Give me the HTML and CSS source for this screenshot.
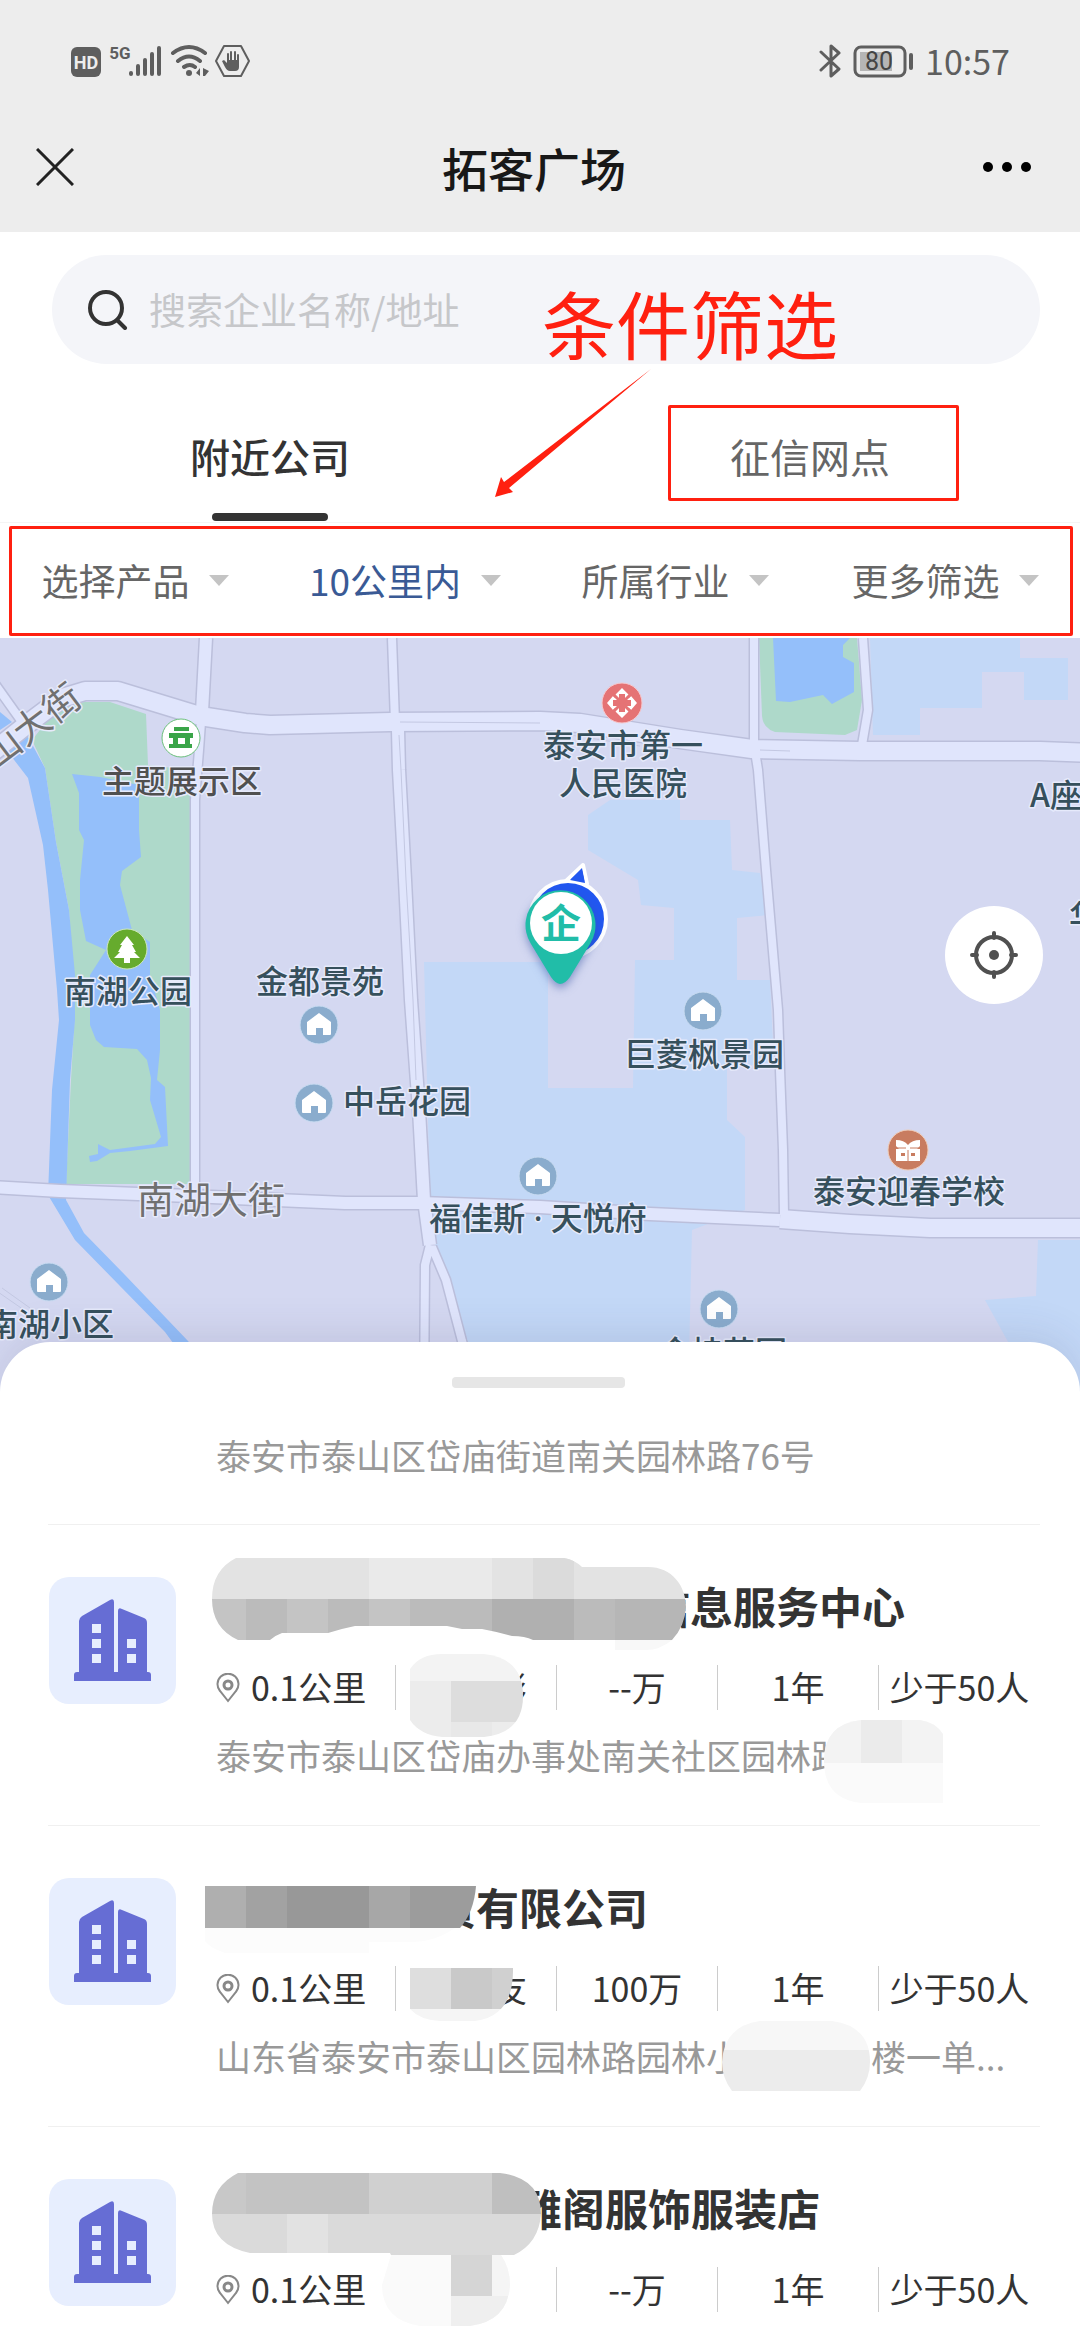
FILE: index.html
```html
<!DOCTYPE html>
<html lang="zh-CN">
<head>
    <meta charset="UTF-8">
    <meta name="viewport" content="width=device-width, initial-scale=1.0">
    <title>拓客广场</title>
    <link rel="stylesheet" href="styles.css">
</head>
<body>
    <svg class="defs" width="0" height="0" aria-hidden="true">
        <symbol id="building" viewBox="0 0 127 127">
            <path fill="#666dd4" d="M30 96V44q0-3 3-5l28-16q4-2 4 2v71zM69 96V34q0-4 4-2l22 9q3 1 3 5v50z"/>
            <path fill="#666dd4" d="M25 104v-6q0-3 3-3h71q3 0 3 3v6z"/>
            <path fill="#e7eefe" d="M43 47h9v9h-9zM43 62h9v9h-9zM43 77h9v9h-9zM78 62h9v9h-9zM78 77h9v9h-9z"/>
        </symbol>
        <symbol id="place" viewBox="0 0 24 30">
            <path fill="none" stroke="#888" stroke-width="2" d="M12 28L4 18a10.500 10.500 0 1 1 16 0z"/>
            <circle cx="12" cy="12" r="4" fill="none" stroke="#888" stroke-width="3"/>
        </symbol>
        <symbol id="home" viewBox="-20 -20 40 40">
            <circle r="19" fill="#8aaccd" stroke="#c9dcf2"/>
            <path fill="#fff" d="M0-12L12-3V9q0 1-1 1H4V3h-7v7h-8q-1 0-1-1V-3z"/>
        </symbol>
    </svg>

    <div class="app">
        <header class="topbar">
            <div class="status">
                <div class="status-left">
                    <svg width="180" height="36" viewBox="70 43 180 36" aria-hidden="true">
                        <rect x="71" y="47" width="30" height="30" rx="6" fill="#5e5e5e"/>
                        <text x="86" y="69" class="hd">HD</text>
                        <text x="120" y="59" class="net">5G</text>
                        <path stroke="#5e5e5e" stroke-width="4" stroke-linecap="round" d="M131 73v1M138 66v8M145 60v14M152 54v20M159 48v26"/>
                        <path fill="none" stroke="#5e5e5e" stroke-width="4" stroke-linecap="round" d="M173 53q16-12 32 0M178 61q11-9 22 0M184 67q6-4 11 0"/>
                        <circle cx="189" cy="73" r="3" fill="#5e5e5e"/>
                        <path fill="#5e5e5e" d="M196 73l4-5v8zM203 68l6 3-4 5h-2z"/>
                        <path fill="none" stroke="#5e5e5e" stroke-width="2" stroke-linejoin="round" d="M224 46h17l8 15-8 15h-17l-8-15z"/>
                        <path fill="#5e5e5e" d="M227 60h12v7q0 4-4 4h-5q-3 0-5-4l-3-6 2-1 3 3z"/>
                        <path stroke="#5e5e5e" stroke-width="2" stroke-linecap="round" d="M228 64V54M231 63V52M235 63V52M238 64V55"/>
                    </svg>
                </div>
                <div class="status-right">
                    <svg width="96" height="36" viewBox="818 43 96 36" aria-hidden="true">
                        <path fill="none" stroke="#5e5e5e" stroke-width="3" stroke-linecap="round" stroke-linejoin="round" d="M820 52l18 17-8 7V46l8 7-18 17"/>
                        <rect x="854" y="47" width="50" height="29" rx="6" fill="none" stroke="#5e5e5e" stroke-width="3"/>
                        <rect x="859" y="52" width="32" height="19" fill="#b5b5b5"/>
                        <text x="878" y="70" class="level">80</text>
                        <path stroke="#5e5e5e" stroke-width="4" stroke-linecap="round" d="M910 55v13"/>
                    </svg>
                    <span>10:57</span>
                </div>
            </div>
            <div class="navbar">
                <button class="nav-btn" aria-label="关闭">
                    <svg width="38" height="38" viewBox="0 0 38 38"><path stroke="#222" stroke-width="3" d="M1 1l36 36M37 1L1 37"/></svg>
                </button>
                <h1>拓客广场</h1>
                <button class="nav-btn more" aria-label="更多">
                    <svg width="50" height="12" viewBox="0 0 50 12"><circle cx="6" cy="6" r="5"/><circle cx="25" cy="6" r="5"/><circle cx="44" cy="6" r="5"/></svg>
                </button>
            </div>
        </header>

        <div class="search-wrap">
            <label class="search">
                <svg width="40" height="40" viewBox="0 0 40 40" aria-hidden="true"><circle cx="18" cy="18" r="16" fill="none" stroke="#333" stroke-width="4"/><path stroke="#333" stroke-width="4" stroke-linecap="round" d="M30 31l7 7"/></svg>
                <input type="search" placeholder="搜索企业名称/地址" aria-label="搜索企业名称/地址">
            </label>
            <div class="note">
                <span>条件筛选</span>
                <svg width="160" height="130" viewBox="490 369 160 130" aria-hidden="true"><path fill="#ff2010" d="M649 370L507 489l4 4-18 5 6-20 3 5z"/></svg>
            </div>
        </div>

        <div class="tabs">
            <button class="tab active">附近公司</button>
            <button class="tab marked">征信网点</button>
        </div>

        <div class="filters">
            <label class="filter">
                <select aria-label="选择产品"><option>选择产品</option></select>
            </label>
            <label class="filter active">
                <select aria-label="距离"><option>10公里内</option></select>
            </label>
            <label class="filter">
                <select aria-label="所属行业"><option>所属行业</option></select>
            </label>
            <label class="filter">
                <select aria-label="更多筛选"><option>更多筛选</option></select>
            </label>
        </div>

        <div class="map">
            <svg class="map-canvas" viewBox="0 638 1080 762" preserveAspectRatio="xMidYMin slice">
                <!-- blocks -->
                <g fill="#c3d8f7">
                    <path d="M424 962H548V1088H633L635 960H674V908L641 905 638 880 588 850V815L610 800H680V820H730L732 870 760 873 768 915 737 918V980H770L774 1065H727V1120L745 1137V1210L692 1230 688 1400H484L436 1250 430 1200z"/>
                    <path d="M870 638H1020V658H1068V700H1024V672H982V708H920V735H873z"/>
                    <path d="M1038 1240H1080V1400H1040L985 1300 1036 1296z"/>
                </g>
                <!-- parks -->
                <g fill="#aed9ca">
                    <path d="M32 740L60 705 85 702 110 702 146 714 148 765 191 770V1184H66L71 1080 75 1010 69 910 56 842 45 768z"/>
                    <path d="M759 638H857L862 700 857 730 845 735 775 732Q763 728 762 716z"/>
                </g>
                <!-- water -->
                <g fill="#94bffa">
                    <path d="M0 712L12 722 0 730z"/>
                    <path d="M8 752L27 735 45 768 56 842 69 910 75 975V1020L70 1080 66 1200 84 1233 125 1275 188 1341 240 1400H215L165 1332 75 1240 48 1195 52 1090 59 1020 57 990 48 890 43 845 28 778z"/>
                    <path d="M72 774L100 777 139 785V830L141 857 122 871 120 885 132 930 150 942V975L160 1010V1050L157 1080 165 1087 168 1146 130 1151 110 1153 97 1161 90 1162 89 1156 98 1154V1144L110 1150 155 1144 161 1137 150 1100 151 1078 147 1060 137 1049 104 1047 96 1040 90 1025V975L106 950 86 941 80 910V880L84 840 79 830V793z"/>
                    <path d="M773 638H850L843 645V657L854 663V692L832 704 823 695 790 702 776 701z"/>
                </g>
                <!-- roads: the edge first, then the surface over it -->
                <g class="road edge">
                    <path class="w20" d="M-20 762L30 722 62 698 85 691H118L200 716 245 723 270 725 390 722 540 721 580 723 680 739 752 749 860 751H1040L1090 753"/>
                    <path class="w14" d="M-10 1187L60 1191 190 1196 345 1203H420L540 1207 650 1214 780 1220"/>
                    <path class="w20" d="M780 1219L850 1224 930 1228H1090"/>
                    <path class="w14" d="M206 638L202 712M398 730L399 770 405 880 411 1000 419 1110 424 1200 430 1245"/>
                    <path class="w9" d="M-5 684L22 722M201 722L199 750 195 800V1190M392 638L395 722M754 638V745L758 770 766 870 778 1010 780 1070 783 1150 784 1215M863 638L868 710 862 745M430 1245L425 1265 424 1400M432 1247L446 1280 462 1341 480 1400"/>
                </g>
                <g class="road">
                    <path class="w20" d="M-20 762L30 722 62 698 85 691H118L200 716 245 723 270 725 390 722 540 721 580 723 680 739 752 749 860 751H1040L1090 753"/>
                    <path class="w14" d="M-10 1187L60 1191 190 1196 345 1203H420L540 1207 650 1214 780 1220"/>
                    <path class="w20" d="M780 1219L850 1224 930 1228H1090"/>
                    <path class="w14" d="M206 638L202 712M398 730L399 770 405 880 411 1000 419 1110 424 1200 430 1245"/>
                    <path class="w9" d="M-5 684L22 722M201 722L199 750 195 800V1190M392 638L395 722M754 638V745L758 770 766 870 778 1010 780 1070 783 1150 784 1215M863 638L868 710 862 745M430 1245L425 1265 424 1400M432 1247L446 1280 462 1341 480 1400"/>
                </g>
                <path fill="none" stroke="#c3c8e2" d="M399 735L401 770 406 880 413 1000 416 1080M400 722L540 723M570 735L640 746M760 750L790 751M-2 1292L24 1310M2 1288L30 1308"/>

                <!-- street names -->
                <g class="street">
                    <text transform="translate(40 736) rotate(-37)">山大街</text>
                    <text x="211" y="1214">南湖大街</text>
                </g>

                <!-- places -->
                <g class="place">
                    <text class="grey" x="182" y="793">主题展示区</text>
                    <text x="128" y="1003">南湖公园</text>
                    <text x="320" y="993">金都景苑</text>
                    <text x="407" y="1113">中岳花园</text>
                    <text x="538" y="1230">福佳斯<tspan class="dot"> · </tspan>天悦府</text>
                    <text x="50" y="1336">南湖小区</text>
                    <text x="723" y="1364">金桂花园</text>
                    <text x="704" y="1066">巨菱枫景园</text>
                    <text x="909" y="1203">泰安迎春学校</text>
                    <text x="623" y="757">泰安市第一</text>
                    <text x="623" y="795">人民医院</text>
                    <text x="1056" y="807">A座</text>
                    <text x="1085" y="928">华</text>
                </g>
                <use href="#home" x="299" y="1005" width="40" height="40"/>
                <use href="#home" x="294" y="1083" width="40" height="40"/>
                <use href="#home" x="518" y="1156" width="40" height="40"/>
                <use href="#home" x="29" y="1262" width="40" height="40"/>
                <use href="#home" x="699" y="1289" width="40" height="40"/>
                <use href="#home" x="683" y="991" width="40" height="40"/>
                <g transform="translate(181 738)">
                    <circle r="19" fill="#fff" stroke="#6cc07c"/>
                    <path fill="#3aa548" d="M-7-11H8V-7H-7zM-12-5H12V0H9V6H11V10H-12V6H-8V0H-12zM-3 0V6H4V0z" fill-rule="evenodd"/>
                </g>
                <g transform="translate(127 949)">
                    <circle r="20" fill="#66ab2d" stroke="#cfe8bd"/>
                    <path fill="#fff" d="M0-13L7-4H5L9 3H7L13 9H3V14H-3V9H-13L-7 3H-9L-5-4H-7z"/>
                </g>
                <g transform="translate(622 703)">
                    <circle r="20" fill="#e57375" stroke="#f6c9ce"/>
                    <path fill="#fff" d="M0-15L7-8V-5L9-7 15 0 9 7 7 5V8L0 15-7 8V5L-9 7-15 0-9-7-7-5V-8z"/>
                    <path fill="#e57375" d="M-3-9H3V-3H9V3H3V9H-3V3H-9V-3H-3z"/>
                    <path stroke="#e57375" stroke-width="3" d="M-9-9L9 9M9-9L-9 9"/>
                </g>
                <g transform="translate(908 1150)">
                    <circle r="20" fill="#c87c60" stroke="#f0cdb8"/>
                    <path fill="#fff" d="M-12-10Q-4-10 0-5 4-10 12-10V-4L9-1H12V11H-12V-1H-9L-12-4zM-7 3V6H-3V3zM3 3V6H7V3z" fill-rule="evenodd"/>
                    <path stroke="#c87c60" d="M-12-2H-2M2-2H12M0 0V11"/>
                </g>

                <!-- current position with the company pin over it -->
                <path fill="#2257f0" stroke="#fff" stroke-width="4" stroke-linejoin="round" d="M583 865L566 881 587 884z"/>
                <circle cx="568" cy="919" r="38" fill="#2257f0" stroke="#fff" stroke-width="4"/>
                <path fill="#2257f0" d="M582 868L570 880 585 883z"/>
                <path class="pin" d="M560 984Q555 983 551 977L531 944A35 35 0 1 1 590 944L570 977Q565 984 560 984z"/>
                <circle cx="561" cy="923" r="31" fill="#fff"/>
                <text class="pin-text" x="561" y="938">企</text>
            </svg>
            <button class="locate" aria-label="定位">
                <svg width="48" height="48" viewBox="-24 -24 48 48"><circle r="18" fill="none" stroke="#505050" stroke-width="4"/><circle r="5" fill="#505050"/><path stroke="#505050" stroke-width="4" stroke-linecap="round" d="M0-22v5M0 22v-5M-22 0h5M22 0h-5"/></svg>
            </button>
        </div>

        <main class="sheet">
            <div class="handle"></div>
            <article class="company partial">
                <p class="address">泰安市泰山区岱庙街道南关园林路76号</p>
            </article>

            <article class="company">
                <svg class="logo" aria-hidden="true"><use href="#building"/></svg>
                <div class="info">
                    <h2><span class="gap10"></span>信息服务中心</h2>
                    <ul>
                        <li><svg class="place-icon" aria-hidden="true"><use href="#place"/></svg>0.1公里</li>
                        <li><span class="gap2"></span>彬</li>
                        <li>--万</li>
                        <li>1年</li>
                        <li>少于50人</li>
                    </ul>
                    <p class="address">泰安市泰山区岱庙办事处南关社区园林路</p>
                </div>
                <svg class="mosaic" width="992" height="300" viewBox="48 1525 992 300" aria-hidden="true">
                    <clipPath id="m1"><path d="M236 1558H564Q575 1560 582 1567H648C672 1567 686 1586 686 1607Q685 1626 672 1640H533Q525 1636 512 1636 498 1632 482 1629H462L447 1626H355Q340 1629 328 1633H282Q276 1635 270 1640H238Q212 1628 212 1599 212 1570 236 1558z"/></clipPath>
                    <g clip-path="url(#m1)">
                        <path fill="#e3e3e3" d="M205 1558h482v41H205z"/>
                        <path fill="#eaeaea" d="M369 1558h123v41H369z"/>
                        <path fill="#dbdbdb" d="M533 1558h41v41h-41z"/>
                        <path fill="#c4c4c4" d="M205 1599h41v41h-41zM287 1599h41v41h-41zM369 1599h41v41h-41z"/>
                        <path fill="#bbb" d="M246 1599h41v41h-41zM328 1599h41v41h-41zM410 1599h82v41h-82zM574 1599h41v41h-41z"/>
                        <path fill="#b0b0b0" d="M492 1599h82v41h-82z"/>
                        <path fill="#b6b6b6" d="M615 1599h72v41h-72z"/>
                    </g>
                    <path fill="#f8f8f8" d="M615 1640h57q-12 10-26 10h-31z"/>
                    <clipPath id="m2"><path d="M410 1669Q420 1654 442 1654H484Q523 1658 523 1696 523 1733 484 1737H442Q420 1735 410 1720z"/></clipPath>
                    <g clip-path="url(#m2)">
                        <path fill="#f3f3f3" d="M410 1654h113v27H410z"/>
                        <path fill="#ececec" d="M410 1681h41v56h-41zM492 1722h31v15h-31z"/>
                        <path fill="#ddd" d="M451 1681h72v41h-72z"/>
                        <path fill="#e8e8e8" d="M451 1722h41v15h-41z"/>
                    </g>
                    <clipPath id="m3"><path d="M861 1720H920Q935 1722 943 1734V1803H861Q824 1799 824 1761 824 1724 861 1720z"/></clipPath>
                    <g clip-path="url(#m3)">
                        <path fill="#fafafa" d="M824 1720h119v83H824z"/>
                        <path fill="#f3f3f3" d="M824 1720h119v43H824z"/>
                        <path fill="#ebebeb" d="M861 1720h41v43h-41z"/>
                    </g>
                </svg>
            </article>

            <article class="company">
                <svg class="logo" aria-hidden="true"><use href="#building"/></svg>
                <div class="info">
                    <h2><span class="gap5"></span>贸有限公司</h2>
                    <ul>
                        <li><svg class="place-icon" aria-hidden="true"><use href="#place"/></svg>0.1公里</li>
                        <li><span class="gap2"></span>友</li>
                        <li>100万</li>
                        <li>1年</li>
                        <li>少于50人</li>
                    </ul>
                    <p class="address">山东省泰安市泰山区园林路园林小<span class="gap4"></span>楼一单...</p>
                </div>
                <svg class="mosaic" width="992" height="300" viewBox="48 1826 992 300" aria-hidden="true">
                    <clipPath id="m4"><path d="M205 1886H476Q474 1912 460 1928H205z"/></clipPath>
                    <g clip-path="url(#m4)">
                        <path fill="#afafaf" d="M205 1886h41v42h-41z"/>
                        <path fill="#a2a2a2" d="M246 1886h41v42h-41z"/>
                        <path fill="#989898" d="M287 1886h82v42h-82z"/>
                        <path fill="#a7a7a7" d="M369 1886h41v42h-41z"/>
                        <path fill="#9c9c9c" d="M410 1886h66v42h-66z"/>
                    </g>
                    <path fill="#fcfcfc" d="M205 1928h250q-20 14-45 14H369v11H225q-15-5-20-12z"/>
                    <clipPath id="m5"><path d="M410 1968H513Q514 2016 475 2021H440Q420 2020 410 2009z"/></clipPath>
                    <g clip-path="url(#m5)">
                        <path fill="#dedede" d="M410 1968h41v41h-41z"/>
                        <path fill="#c9c9c9" d="M451 1968h41v41h-41z"/>
                        <path fill="#d0d0d0" d="M492 1968h22v41h-22z"/>
                        <path fill="#f5f5f5" d="M410 2009h104v12H410z"/>
                    </g>
                    <clipPath id="m6"><path d="M760 2021H832Q870 2026 870 2062 870 2078 860 2091H732Q722 2078 722 2062 724 2026 760 2021z"/></clipPath>
                    <g clip-path="url(#m6)">
                        <path fill="#f7f7f7" d="M722 2021h148v29H722z"/>
                        <path fill="#ececec" d="M722 2050h148v41H722z"/>
                    </g>
                </svg>
            </article>

            <article class="company">
                <svg class="logo" aria-hidden="true"><use href="#building"/></svg>
                <div class="info">
                    <h2><span class="gap7"></span>雅阁服饰服装店</h2>
                    <ul>
                        <li><svg class="place-icon" aria-hidden="true"><use href="#place"/></svg>0.1公里</li>
                        <li></li>
                        <li>--万</li>
                        <li>1年</li>
                        <li>少于50人</li>
                    </ul>
                </div>
                <svg class="mosaic" width="992" height="300" viewBox="48 2127 992 300" aria-hidden="true">
                    <clipPath id="m7"><path d="M238 2173H500Q541 2178 541 2214 539 2243 514 2255H391L390 2253H250Q212 2245 212 2214 212 2186 238 2173z"/></clipPath>
                    <g clip-path="url(#m7)">
                        <path fill="#c8c8c8" d="M212 2173h34v41h-34z"/>
                        <path fill="#c3c3c3" d="M246 2173h123v41H246z"/>
                        <path fill="#d0d0d0" d="M369 2173h123v41H369z"/>
                        <path fill="#bfbfbf" d="M492 2173h49v41h-49z"/>
                        <path fill="#dadada" d="M212 2214h329v41H212z"/>
                        <path fill="#e2e2e2" d="M287 2214h41v41h-41z"/>
                    </g>
                    <clipPath id="m8"><path d="M391 2255H501Q510 2268 510 2285 508 2321 470 2326H420Q382 2320 382 2285z"/></clipPath>
                    <g clip-path="url(#m8)">
                        <path fill="#fafafa" d="M382 2255h128v71H382z"/>
                        <path fill="#f5f5f5" d="M492 2255h18v41h-18z"/>
                        <path fill="#d5d5d5" d="M451 2255h41v41h-41z"/>
                        <path fill="#efefef" d="M451 2296h59v30h-59z"/>
                    </g>
                </svg>
            </article>
        </main>
    </div>
</body>
</html>
```
FILE: styles.css
```css
*, *::before, *::after {
    box-sizing: border-box;
}
body {
    margin: 0;
    background-color: #fff;
    color: #333;
    font-family: "Noto Sans CJK SC", "Noto Sans", sans-serif;
}
h1, h2, p, ul {
    margin: 0;
    padding: 0;
}
button {
    border: 0;
    padding: 0;
    background: none;
    font-family: inherit;
    color: inherit;
}
svg {
    display: block;
}
.defs {
    position: absolute;
}
.app {
    display: flex;
    flex-direction: column;
    height: 100vh;
    overflow: hidden;
}

/* status bar and title */
.topbar {
    flex: none;
    height: 232px;
    background-color: #ededed;
}
.status {
    display: flex;
    justify-content: space-between;
    align-items: center;
    height: 122px;
    padding: 0 70px;
}
.status-right {
    display: flex;
    align-items: center;
    gap: 10px;
    font-size: 34px;
    line-height: 40px;
    color: #5e5e5e;
}
.status text {
    text-anchor: middle;
    font-family: Roboto, sans-serif;
}
.hd {
    font-size: 18px;
    font-weight: 700;
    fill: #ededed;
}
.net {
    font-size: 17px;
    font-weight: 700;
    fill: #5e5e5e;
}
.level {
    font-size: 25px;
    fill: #444;
}
.navbar {
    display: flex;
    justify-content: space-between;
    align-items: center;
    height: 90px;
    padding: 0 48px 0 36px;
}
.nav-btn {
    width: 50px;
}
.navbar h1 {
    font-size: 46px;
    font-weight: 500;
    line-height: 60px;
    color: #181818;
}

/* search */
.search-wrap {
    position: relative;
    flex: none;
    padding: 23px 40px 18px 52px;
}
.search {
    display: flex;
    align-items: center;
    gap: 21px;
    height: 109px;
    padding: 0 36px;
    border-radius: 55px;
    background-color: #f4f5f9;
}
.search input {
    flex: 1;
    min-width: 0;
    border: 0;
    padding: 0 0 2px;
    outline: 0;
    background: none;
    font-family: inherit;
    font-size: 37px;
    line-height: 56px;
}
.search input::placeholder {
    color: #c6c7ca;
    opacity: 1;
}
.note {
    position: absolute;
    top: 44px;
    left: calc(50% + 2px);
    z-index: 2;
    color: #ff2010;
    font-size: 74px;
    line-height: 92px;
}
.note svg {
    margin-left: -50px;
}

/* tabs */
.tabs {
    display: flex;
    flex: none;
}
.tab {
    position: relative;
    display: flex;
    flex: 1;
    flex-direction: column;
    align-items: center;
    height: 140px;
    padding-top: 44px;
    font-size: 40px;
    line-height: 60px;
    color: #666;
}
.tab.active {
    color: #333;
    font-weight: 500;
}
.tab.active::after {
    content: "";
    width: 116px;
    height: 8px;
    margin-top: 27px;
    border-radius: 4px;
    background-color: #333;
}
.tab.marked::after {
    content: "";
    position: absolute;
    top: 23px;
    left: calc(50% - 142px);
    width: 291px;
    height: 96px;
    border: 3px solid #ff2010;
    border-radius: 2px;
}

/* filters */
.filters {
    position: relative;
    display: flex;
    flex: none;
    height: 116px;
    border-top: 1px solid #f5f5f5;
}
.filters::after {
    content: "";
    position: absolute;
    inset: 3px 7px 2px 9px;
    border: 3px solid #ff2010;
    border-radius: 2px;
    pointer-events: none;
}
.filter {
    display: flex;
    flex: 1;
    justify-content: center;
    align-items: center;
    gap: 19px;
    color: #666;
}
.filter.active {
    color: #3a5a95;
}
.filter select {
    appearance: none;
    border: 0;
    padding: 0 0 2px;
    background: none;
    color: inherit;
    font-family: inherit;
    font-size: 37px;
    line-height: 56px;
}
.filter::after {
    content: "";
    border: 10px solid transparent;
    border-top: 11px solid #c4c4c4;
    border-bottom: 0;
}

/* map */
.map {
    position: relative;
    flex: none;
    height: 762px;
    background-color: #d4d8f1;
}
.map-canvas {
    width: 100%;
    height: 100%;
}
.road {
    fill: none;
    stroke: #e0e5fc;
    stroke-linejoin: round;
}
.road.edge {
    stroke: #bbbfdb;
}
.road .w9 { stroke-width: 8px; }
.road .w14 { stroke-width: 12px; }
.road .w20 { stroke-width: 18px; }
.road.edge .w9 { stroke-width: 11px; }
.road.edge .w14 { stroke-width: 15px; }
.road.edge .w20 { stroke-width: 21px; }
.street, .place {
    text-anchor: middle;
    paint-order: stroke;
    stroke: #e6eafb;
    stroke-width: 3px;
    stroke-linejoin: round;
}
.street {
    font-size: 37px;
    fill: #707070;
}
.place {
    font-size: 32px;
    font-weight: 500;
    fill: #36505c;
}
.place .grey {
    fill: #505050;
}
.place .dot {
    font-family: "Noto Sans", sans-serif;
}
.pin {
    fill: #21bda8;
    filter: drop-shadow(0 4px 4px rgba(50, 80, 160, 0.5));
}
.pin-text {
    text-anchor: middle;
    font-size: 40px;
    font-weight: 700;
    fill: #21bda8;
}
.locate {
    position: absolute;
    top: 268px;
    right: 37px;
    display: flex;
    justify-content: center;
    align-items: center;
    width: 98px;
    height: 98px;
    border-radius: 50%;
    background-color: #fff;
}

/* company list */
.sheet {
    position: relative;
    flex: 1;
    min-height: 0;
    margin-top: -58px;
    padding: 35px 40px 0 48px;
    overflow: hidden;
    border-radius: 50px 50px 0 0;
    background-color: #fff;
    box-shadow: 0 -8px 40px rgba(60, 60, 100, 0.12);
}
.handle {
    width: 173px;
    height: 11px;
    margin: 0 0 0 calc(50% - 92px);
    border-radius: 4px;
    background-color: #e6e6e6;
}
.company {
    position: relative;
    display: flex;
    gap: 40px;
    height: 301px;
    padding-top: 52px;
    border-bottom: 1px solid #f0f0f0;
}
.company.partial {
    height: 137px;
    padding: 22px 0 0 168px;
}
.logo {
    flex: none;
    width: 127px;
    height: 127px;
    margin-left: 1px;
    border-radius: 20px;
    background-color: #e7eefe;
}
.info {
    flex: 1;
    min-width: 0;
}
.info h2 {
    font-size: 43px;
    font-weight: 700;
    line-height: 56px;
    white-space: nowrap;
}
.info ul {
    display: grid;
    grid-template-columns: 179fr 161fr 161fr 161fr 162fr;
    margin-top: 32px;
    list-style: none;
    font-size: 34px;
    line-height: 44px;
}
.info li {
    display: flex;
    justify-content: center;
    height: 45px;
    white-space: nowrap;
}
.info li:first-child {
    justify-content: flex-start;
    gap: 11px;
}
.info li + li {
    border-left: 1px solid #ccc;
}
.place-icon {
    width: 24px;
    height: 30px;
    margin-top: 8px;
}
.address {
    margin-top: 20px;
    font-size: 35px;
    line-height: 50px;
    color: #999;
    white-space: nowrap;
}
/* room for the characters under the mosaic */
.gap2, .gap4, .gap5, .gap7, .gap10 {
    display: inline-block;
}
.gap2 { width: 68px; }
.gap4 { width: 130px; }
.gap5 { width: 217px; }
.gap7 { width: 303px; }
.gap10 { width: 431px; }
.mosaic {
    position: absolute;
    top: 0;
    left: 0;
}
```
